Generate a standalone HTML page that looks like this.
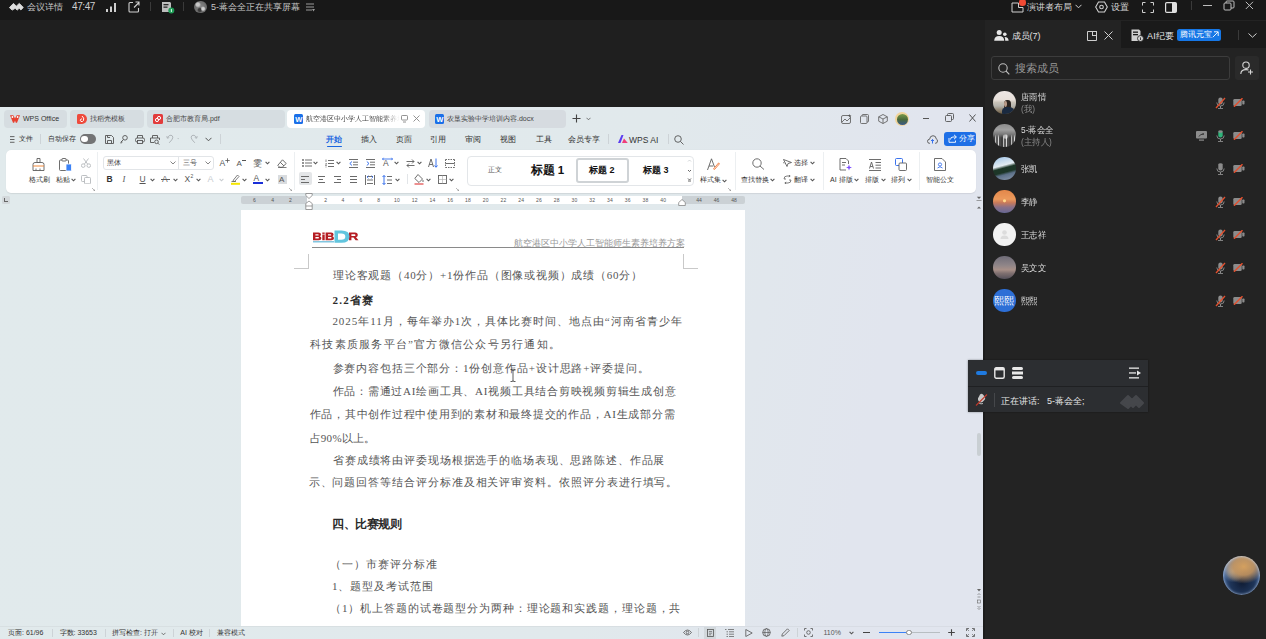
<!DOCTYPE html>
<html><head><meta charset="utf-8">
<style>
*{margin:0;padding:0;box-sizing:border-box}
html,body{width:1266px;height:639px;overflow:hidden;background:#1f1f1f;font-family:"Liberation Sans",sans-serif}
.a{position:absolute}
.t{position:absolute;white-space:nowrap;line-height:1}
#topbar{left:0;top:0;width:1266px;height:20px;background:#181818}
#dark{left:0;top:20px;width:985px;height:87px;background:#1f1f1f}
#panel{left:985px;top:20px;width:281px;height:619px;background:#232323}
#wps{left:0;top:107px;width:983px;height:532px;background:linear-gradient(100deg,#e1eaec 0%,#e1e9ec 62%,#e1e5ee 86%,#e1e5ee 100%);overflow:hidden}
#wpsedge{left:983px;top:107px;width:2px;height:532px;background:#1c1c1c}
</style></head><body>
<div id="topbar" class="a"></div>
<div id="dark" class="a"></div>
<div id="panel" class="a"></div>
<div id="wps" class="a"></div>
<div id="wpsedge" class="a"></div>

<!-- TOP BAR -->
<svg class="a" style="left:0px;top:0px" width="30" height="14" viewBox="0 0 30 14"><path d="M9.4 7.6 L13.5 3.4 L16.3 6.2 L19.3 3.4 L23.3 7.5 L20.9 9.9 L19.2 8.3 L17.2 10.1 L15.2 8.3 L12.2 10.1 Z" fill="#dedede" stroke="#dedede" stroke-width="0.9" stroke-linejoin="round"/></svg>
<div class="t" style="left:27px;top:3px;font-size:9px;color:#c6c6c6">会议详情</div>
<div class="t" style="left:72px;top:2px;font-size:10px;color:#cfcfcf;letter-spacing:-0.4px">47:47</div>
<svg class="a" style="left:106px;top:3px" width="11" height="9"><rect x="0" y="6" width="2" height="3" fill="#cfcfcf"/><rect x="4" y="3.5" width="2" height="5.5" fill="#cfcfcf"/><rect x="8" y="0" width="2" height="9" fill="#cfcfcf"/></svg>
<svg class="a" style="left:128px;top:1px" width="12" height="12" viewBox="0 0 12 12"><path d="M5 1.5 H2 Q1 1.5 1 2.5 V10 Q1 11 2 11 H9.5 Q10.5 11 10.5 10 V7" fill="none" stroke="#cfcfcf" stroke-width="1.1"/><path d="M6 6.5 L11 1.5 M7.5 1 H11 V4.5" fill="none" stroke="#cfcfcf" stroke-width="1.1"/></svg>
<div class="a" style="left:150px;top:2px;width:1px;height:9px;background:#3a3a3a"></div>
<svg class="a" style="left:161px;top:1px" width="14" height="13" viewBox="0 0 14 13"><path d="M1 1 H9 L10 2 V11 H1 Z" fill="#bdbdbd"/><rect x="2.5" y="3" width="5" height="1.3" fill="#2a2a2a"/><rect x="2.5" y="5.5" width="4" height="1.3" fill="#2a2a2a"/><circle cx="10.3" cy="9.6" r="3" fill="#1f9d57"/><rect x="9.9" y="8" width="0.9" height="3" fill="#e8fff0"/></svg>
<div class="a" style="left:183px;top:2px;width:1px;height:9px;background:#3a3a3a"></div>
<div class="a" style="left:194px;top:0.5px;width:12.5px;height:12.5px;border-radius:50%;background:radial-gradient(circle at 30% 30%, #c8c8c8 0 12%, transparent 25%), radial-gradient(circle at 70% 65%, #d0d0d0 0 10%, transparent 22%), radial-gradient(circle at 45% 75%, #3a3a3a 0 12%, transparent 25%), radial-gradient(circle at 50% 50%, #8a8a8a, #6a6a6a 70%, #5a5a5a)"></div>
<div class="t" style="left:211px;top:3px;font-size:9px;color:#c6c6c6">5-蒋会全正在共享屏幕</div>
<svg class="a" style="left:306px;top:3px" width="9" height="9"><rect x="0" y="0.5" width="8" height="1" fill="#9a9a9a"/><rect x="0" y="3.5" width="8" height="1" fill="#9a9a9a"/><rect x="0" y="6.5" width="6" height="1" fill="#9a9a9a"/><path d="M6 6 L9 6 L7.5 8.5Z" fill="#9a9a9a"/></svg>

<svg class="a" style="left:1011px;top:2px" width="13" height="11" viewBox="0 0 13 11"><path d="M1 1 H7.5 V5.5 H12 V10 H1 Z" fill="none" stroke="#cfcfcf" stroke-width="1"/></svg>
<div class="a" style="left:1019px;top:-1px;width:6.5px;height:6.5px;border-radius:50%;background:#f04a34"></div>
<div class="t" style="left:1027px;top:3px;font-size:9px;color:#d4d4d4">演讲者布局</div>
<svg class="a" style="left:1075px;top:4px" width="7" height="5"><path d="M0.5 0.8 L3.5 3.8 L6.5 0.8" fill="none" stroke="#cfcfcf" stroke-width="1"/></svg>
<svg class="a" style="left:1095px;top:1px" width="13" height="12" viewBox="0 0 13 12"><path d="M3.5 1 H9.5 L12.3 6 L9.5 11 H3.5 L0.7 6 Z" fill="none" stroke="#cfcfcf" stroke-width="1.1"/><circle cx="6.5" cy="6" r="1.8" fill="none" stroke="#cfcfcf" stroke-width="1.1"/></svg>
<div class="t" style="left:1111px;top:3px;font-size:9px;color:#d4d4d4">设置</div>
<svg class="a" style="left:1142px;top:2px" width="12" height="11" viewBox="0 0 12 11"><path d="M0.5 3.5 V0.5 H3.5 M8.5 0.5 H11.5 V3.5 M11.5 7.5 V10.5 H8.5 M3.5 10.5 H0.5 V7.5" fill="none" stroke="#cfcfcf" stroke-width="1"/></svg>
<svg class="a" style="left:1165px;top:2px" width="12" height="11" viewBox="0 0 12 11"><rect x="0.6" y="0.6" width="10.8" height="9.8" rx="1.2" fill="none" stroke="#e0e0e0" stroke-width="1.2"/><rect x="7" y="1" width="4" height="9" fill="#e0e0e0"/></svg>
<div class="a" style="left:1191px;top:1px;width:1px;height:9px;background:#3a3a3a"></div>
<div class="a" style="left:1203px;top:5px;width:9px;height:1px;background:#bdbdbd"></div>
<svg class="a" style="left:1223px;top:0px" width="12" height="11" viewBox="0 0 12 11"><rect x="1" y="3" width="7" height="7" rx="1" fill="none" stroke="#bdbdbd" stroke-width="1"/><path d="M3 3 V2 Q3 1 4 1 H10 Q11 1 11 2 V7 Q11 8 10 8 H8" fill="none" stroke="#bdbdbd" stroke-width="1"/></svg>
<svg class="a" style="left:1245px;top:1px" width="9" height="9"><path d="M0.8 0.8 L8 8 M8 0.8 L0.8 8" stroke="#bdbdbd" stroke-width="1"/></svg>



<!-- WPS TABS -->
<div class="a" style="left:4px;top:110px;width:63px;height:17.5px;border-radius:4px;background:#d6dde1"></div>
<svg class="a" style="left:10px;top:115px" width="10" height="8" viewBox="0 0 10 8"><path d="M0 0.3 H3.3 L5 3.6 L6.7 0.3 H10 L7 7.7 H5.8 L5 5.5 L4.2 7.7 H3 Z" fill="#e8402f"/><circle cx="2.4" cy="2" r="0.9" fill="#fff"/><circle cx="7.6" cy="2" r="0.9" fill="#fff"/></svg>
<div class="t" style="left:23px;top:115px;font-size:7px;color:#333;">WPS Office</div>
<div class="a" style="left:70px;top:110px;width:74px;height:17.5px;border-radius:4px;background:#d6dde1"></div>
<div class="a" style="left:77px;top:114px;width:9.5px;height:10px;border-radius:1.5px 5px 5px 1.5px;background:#ee4a3c"></div>
<svg class="a" style="left:78px;top:115px" width="8" height="8"><path d="M4 1 Q6.5 3 5.5 5.5 Q4.5 7 3 6.5 Q2 6 2.5 4.5 Q3 3.8 4 4" fill="none" stroke="#fff" stroke-width="1"/></svg>
<div class="t" style="left:90px;top:115px;font-size:7px;color:#444">找稻壳模板</div>
<div class="a" style="left:146.5px;top:110px;width:138px;height:17.5px;border-radius:4px;background:#d6dde1"></div>
<div class="a" style="left:153px;top:114px;width:9.5px;height:9.5px;border-radius:1.5px;background:#e23b3b"></div>
<svg class="a" style="left:154px;top:115px" width="8" height="8"><circle cx="5" cy="3" r="1.6" fill="none" stroke="#fff" stroke-width="1"/><circle cx="3" cy="5" r="1.6" fill="none" stroke="#fff" stroke-width="1"/></svg>
<div class="t" style="left:166px;top:115px;font-size:7px;color:#444">合肥市教育局.pdf</div>
<div class="a" style="left:287px;top:110px;width:138px;height:17.6px;border-radius:4px;background:#fff"></div>
<div class="a" style="left:294px;top:114.2px;width:9.2px;height:9.5px;border-radius:1.5px;background:#1a6fe8"></div>
<div class="t" style="left:295.2px;top:115.5px;font-size:7.5px;color:#fff;font-weight:bold">W</div>
<div class="t" style="left:306px;top:115px;font-size:7px;color:#444;width:94px;overflow:hidden;-webkit-mask-image:linear-gradient(90deg,#000 80%,transparent)">航空港区中小学人工智能素养培</div>
<svg class="a" style="left:401px;top:115px" width="7" height="8"><rect x="0.5" y="0.5" width="6" height="4.5" rx="0.8" fill="none" stroke="#777" stroke-width="0.8"/><path d="M2 7 H5" stroke="#777" stroke-width="0.8"/></svg>
<svg class="a" style="left:413px;top:115px" width="7" height="7"><path d="M0.5 0.5 L6.5 6.5 M6.5 0.5 L0.5 6.5" stroke="#888" stroke-width="0.9"/></svg>
<div class="a" style="left:428.6px;top:110px;width:137px;height:17.5px;border-radius:4px;background:#d6dbe0"></div>
<div class="a" style="left:435px;top:114.2px;width:9.2px;height:9.5px;border-radius:1.5px;background:#1a6fe8"></div>
<div class="t" style="left:436.2px;top:115.5px;font-size:7.5px;color:#fff;font-weight:bold">W</div>
<div class="t" style="left:447px;top:115px;font-size:7px;color:#444">农垦实验中学培训内容.docx</div>
<svg class="a" style="left:572px;top:114px" width="9" height="9"><path d="M4.5 0.5 V8.5 M0.5 4.5 H8.5" stroke="#444" stroke-width="1.1"/></svg>
<svg class="a" style="left:586px;top:117px" width="5" height="4"><path d="M0.5 0.8 L2.5 2.8 L4.5 0.8" fill="none" stroke="#555" stroke-width="0.8"/></svg>

<svg class="a" style="left:841px;top:114px" width="11" height="10" viewBox="0 0 11 10"><rect x="0.5" y="1.5" width="9" height="8" rx="1.5" fill="none" stroke="#666" stroke-width="0.9"/><path d="M1 8 L4 5 L6 7 L9 4" fill="none" stroke="#666" stroke-width="0.9"/><path d="M8.5 0 L9 1.3 L10.5 1.8 L9 2.3 L8.5 3.6 L8 2.3 L6.5 1.8 L8 1.3Z" fill="#555"/></svg>
<svg class="a" style="left:860px;top:114px" width="9" height="10" viewBox="0 0 9 10"><rect x="0.5" y="2" width="6.5" height="7.5" rx="1" fill="none" stroke="#666" stroke-width="0.9"/><path d="M2 2 V1.5 Q2 0.5 3 0.5 H7.5 Q8.5 0.5 8.5 1.5 V7 Q8.5 8 7.5 8 H7" fill="none" stroke="#666" stroke-width="0.9"/></svg>
<svg class="a" style="left:878px;top:113.5px" width="10" height="10" viewBox="0 0 10 10"><path d="M5 0.5 L9.3 2.8 V7.2 L5 9.5 L0.7 7.2 V2.8Z M0.7 2.8 L5 5 L9.3 2.8 M5 5 V9.5" fill="none" stroke="#666" stroke-width="0.9"/></svg>
<div class="a" style="left:895px;top:112px;width:14px;height:14px;border-radius:50%;background:#f1d49a"></div>
<div class="a" style="left:896.5px;top:113.5px;width:11px;height:11px;border-radius:50%;background:linear-gradient(#7a9a4a,#4a6a3a 50%,#3a5a8a)"></div>
<div class="a" style="left:923px;top:118px;width:6px;height:0.9px;background:#555"></div>
<svg class="a" style="left:944.5px;top:113px" width="9" height="9"><rect x="0.5" y="2.5" width="6" height="6" rx="1" fill="none" stroke="#555" stroke-width="0.9"/><path d="M2.5 2.5 V1.5 Q2.5 0.5 3.5 0.5 H7.5 Q8.5 0.5 8.5 1.5 V5.5 Q8.5 6.5 7.5 6.5 H6.5" fill="none" stroke="#555" stroke-width="0.9"/></svg>
<svg class="a" style="left:968.5px;top:113px" width="7" height="10"><path d="M0.5 1.5 L6.5 8.5 M6.5 1.5 L0.5 8.5" stroke="#444" stroke-width="0.9"/></svg>

<!-- Row 2 -->
<svg class="a" style="left:10px;top:136px" width="5" height="7"><rect x="0" y="0.2" width="4.5" height="0.9" fill="#555"/><rect x="0" y="3" width="4.5" height="0.9" fill="#555"/><rect x="0" y="5.8" width="4.5" height="0.9" fill="#555"/></svg>
<div class="t" style="left:19px;top:135px;font-size:7px;color:#333">文件</div>
<div class="a" style="left:40px;top:134px;width:1px;height:10px;background:#cdd3d7"></div>
<div class="t" style="left:47.5px;top:135px;font-size:7px;color:#333">自动保存</div>
<div class="a" style="left:80px;top:134px;width:16px;height:9.5px;border-radius:5px;background:#737475"></div>
<div class="a" style="left:81px;top:135.5px;width:6.6px;height:6.6px;border-radius:50%;background:#fff"></div>
<svg class="a" style="left:105px;top:134.5px" width="9" height="9" viewBox="0 0 9 9"><path d="M0.5 0.5 H6.5 L8.5 2.5 V8.5 H0.5Z" fill="none" stroke="#555" stroke-width="0.9"/><path d="M2.5 8.5 V5.5 H6.5 V8.5 M2.5 0.5 V2.5 H5" fill="none" stroke="#555" stroke-width="0.9"/></svg>
<svg class="a" style="left:120px;top:134.5px" width="8" height="9" viewBox="0 0 8 9"><circle cx="5" cy="2.8" r="2.3" fill="none" stroke="#555" stroke-width="0.9"/><path d="M3.5 4.5 L1 7 M1 7 H2.5 M1 7 V8.5" fill="none" stroke="#555" stroke-width="0.9"/></svg>
<svg class="a" style="left:134.5px;top:134.5px" width="10" height="9" viewBox="0 0 10 9"><path d="M2.5 3 V0.5 H7.5 V3" fill="none" stroke="#555" stroke-width="0.9"/><rect x="0.5" y="3" width="9" height="4" rx="1.5" fill="none" stroke="#555" stroke-width="0.9"/><rect x="2.5" y="5.5" width="5" height="3" fill="#e1e8ec" stroke="#555" stroke-width="0.9"/></svg>
<svg class="a" style="left:150px;top:134.5px" width="10" height="10" viewBox="0 0 10 10"><path d="M2.5 3 V0.5 H7.5 V3" fill="none" stroke="#555" stroke-width="0.9"/><path d="M4 7.5 H0.5 V3 H9.5 V5" fill="none" stroke="#555" stroke-width="0.9"/><circle cx="6.5" cy="6.8" r="1.8" fill="none" stroke="#555" stroke-width="0.9"/><path d="M7.8 8.1 L9.3 9.6" stroke="#555" stroke-width="0.9"/></svg>
<svg class="a" style="left:166px;top:134px" width="16" height="10" viewBox="0 0 16 10"><path d="M1.5 3.5 Q3 1 5 1.2 Q7 1.5 6.8 3.8 Q6.5 5.5 3.2 8.8" fill="none" stroke="#a9afb3" stroke-width="0.9"/><path d="M0.8 2.2 L1.3 4.2 L3.2 3.6" fill="none" stroke="#a9afb3" stroke-width="0.9"/><path d="M11.3 4.2 L13 4.2 L12.15 5.3Z" fill="#a9afb3"/></svg>
<svg class="a" style="left:189px;top:134px" width="9" height="10" viewBox="0 0 9 10"><path d="M7.5 3.5 Q6 1 4 1.2 Q2 1.5 2.2 3.8 Q2.5 5.5 5.8 8.8" fill="none" stroke="#a9afb3" stroke-width="0.9"/><path d="M8.2 2.2 L7.7 4.2 L5.8 3.6" fill="none" stroke="#a9afb3" stroke-width="0.9"/></svg>
<svg class="a" style="left:204.5px;top:137px" width="7" height="5"><path d="M0.5 0.8 L3.5 3.8 L6.5 0.8" fill="none" stroke="#555" stroke-width="1"/></svg>
<div class="a" style="left:220px;top:134px;width:1px;height:10px;background:#cdd3d7"></div>

<div class="t" style="left:326px;top:136px;font-size:8px;color:#1a66e0;font-weight:bold">开始</div>
<div class="a" style="left:326.5px;top:145.5px;width:15.5px;height:1.5px;background:#1a66e0;border-radius:1px"></div>
<div class="t" style="left:360.5px;top:136px;font-size:8px;color:#333">插入</div>
<div class="t" style="left:395.5px;top:136px;font-size:8px;color:#333">页面</div>
<div class="t" style="left:430px;top:136px;font-size:8px;color:#333">引用</div>
<div class="t" style="left:465px;top:136px;font-size:8px;color:#333">审阅</div>
<div class="t" style="left:500px;top:136px;font-size:8px;color:#333">视图</div>
<div class="t" style="left:535.5px;top:136px;font-size:8px;color:#333">工具</div>
<div class="t" style="left:568px;top:136px;font-size:8px;color:#333">会员专享</div>
<div class="a" style="left:608px;top:134px;width:1px;height:10px;background:#cdd3d7"></div>
<svg class="a" style="left:618px;top:135px" width="10" height="8" viewBox="0 0 10 8"><path d="M0 8 L3.5 0 H5.5 L2.5 8Z" fill="#5b3cf0"/><path d="M4 8 L6 3.5 L9.8 8Z" fill="#ee3e7a"/></svg>
<div class="t" style="left:629px;top:135.5px;font-size:8.5px;color:#333">WPS AI</div>
<div class="a" style="left:668px;top:134px;width:1px;height:10px;background:#cdd3d7"></div>
<svg class="a" style="left:674px;top:134.5px" width="10" height="10" viewBox="0 0 10 10"><circle cx="4" cy="4" r="3.3" fill="none" stroke="#555" stroke-width="0.9"/><path d="M6.5 6.5 L9.5 9.5" stroke="#555" stroke-width="0.9"/></svg>
<svg class="a" style="left:927px;top:134.5px" width="11" height="9" viewBox="0 0 11 9"><path d="M3 8.3 H2.5 Q0.5 8.3 0.5 6.3 Q0.5 4.3 2.5 4.3 Q3 0.7 6 0.7 Q9 0.7 9.2 3.8 Q10.5 4.3 10.5 6 Q10.5 8.3 8.3 8.3 H8" fill="none" stroke="#555" stroke-width="0.9"/><path d="M5.5 8.5 V4.5 M4 6 L5.5 4.5 L7 6" fill="none" stroke="#2563eb" stroke-width="0.9"/></svg>
<div class="a" style="left:944px;top:132px;width:32px;height:13.7px;border-radius:3px;background:#1e6fe6"></div>
<svg class="a" style="left:947.5px;top:134px" width="9" height="9" viewBox="0 0 9 9"><path d="M6 0.8 L8.4 3 L6 5.2 M8.2 3 H5 Q2.5 3 2.5 5.5 M1 4 V8.3 H7.5 V6.5" fill="none" stroke="#fff" stroke-width="0.9"/></svg>
<div class="t" style="left:958.5px;top:135px;font-size:7.5px;color:#fff">分享</div>


<!-- RIBBON -->
<div class="a" style="left:6px;top:150px;width:970px;height:42.5px;border-radius:5px;background:#fff;box-shadow:0 0.5px 1px rgba(0,0,0,.08)"></div>
<!-- clipboard group -->
<svg class="a" style="left:32px;top:158px" width="13" height="13" viewBox="0 0 13 13"><path d="M5 0.5 H8 V4.5 H5Z" fill="none" stroke="#5e5e5e" stroke-width="0.9"/><path d="M1 12.5 V6.5 Q1 4.5 3 4.5 H10 Q12 4.5 12 6.5 V12.5Z" fill="none" stroke="#5e5e5e" stroke-width="0.9"/><path d="M1 8 H12" stroke="#f08a3c" stroke-width="1"/><path d="M4 12.5 V10.5 M8 12.5 V10.5" stroke="#5e5e5e" stroke-width="0.8"/></svg>
<div class="t" style="left:28.5px;top:175.5px;font-size:7px;color:#333">格式刷</div>
<svg class="a" style="left:59px;top:158px" width="13" height="13" viewBox="0 0 13 13"><rect x="0.5" y="2" width="9" height="10.5" rx="1" fill="none" stroke="#5e5e5e" stroke-width="0.9"/><rect x="3" y="0.5" width="4" height="2.5" rx="0.5" fill="#fff" stroke="#5e5e5e" stroke-width="0.9"/><rect x="7" y="6" width="5.5" height="7" rx="0.8" fill="#3b82f6" stroke="#fff" stroke-width="0.8"/></svg>
<div class="t" style="left:55.5px;top:175.5px;font-size:7px;color:#333">粘贴</div>
<svg class="a" style="left:70.5px;top:178.2px" width="5" height="4"><path d="M0.6 0.8 L2.5 2.8 L4.4 0.8" fill="none" stroke="#555" stroke-width="1.1"/></svg>

<svg class="a" style="left:81px;top:158px" width="10" height="10" viewBox="0 0 10 10"><circle cx="2.2" cy="7.6" r="1.8" fill="none" stroke="#b5b9bc" stroke-width="0.9"/><circle cx="7.8" cy="7.6" r="1.8" fill="none" stroke="#b5b9bc" stroke-width="0.9"/><path d="M3.3 6.2 L7.5 0.5 M6.7 6.2 L2.5 0.5" stroke="#b5b9bc" stroke-width="0.9"/></svg>
<svg class="a" style="left:81px;top:175px" width="10" height="9" viewBox="0 0 10 9"><rect x="0.5" y="0.5" width="5.5" height="6" rx="0.8" fill="none" stroke="#b5b9bc" stroke-width="0.9"/><rect x="3.5" y="2.5" width="6" height="6.3" rx="0.8" fill="#fff" stroke="#b5b9bc" stroke-width="0.9"/></svg>
<svg class="a" style="left:92px;top:187.5px" width="3" height="3"><path d="M0 0 L3 3 M3 1 V3 H1" fill="none" stroke="#888" stroke-width="0.6"/></svg>
<div class="a" style="left:97px;top:152px;width:1px;height:38px;background:#eceff1"></div>
<!-- font group -->
<div class="a" style="left:102.5px;top:155.5px;width:111px;height:14.5px;border:1px solid #e2e5e8;border-radius:3px"></div>
<div class="a" style="left:177.5px;top:156px;width:1px;height:13.5px;background:#e2e5e8"></div>
<div class="t" style="left:107px;top:159px;font-size:7px;color:#333">黑体</div>
<svg class="a" style="left:170px;top:161px" width="6" height="4"><path d="M0.5 0.5 L3 3 L5.5 0.5" fill="none" stroke="#666" stroke-width="0.8"/></svg>
<div class="t" style="left:183px;top:159px;font-size:7px;color:#555">三号</div>
<svg class="a" style="left:204.5px;top:161px" width="6" height="4"><path d="M0.5 0.5 L3 3 L5.5 0.5" fill="none" stroke="#666" stroke-width="0.8"/></svg>
<div class="t" style="left:219.5px;top:158.5px;font-size:8.5px;color:#555">A</div>
<svg class="a" style="left:225px;top:157.5px" width="5" height="5"><path d="M2.5 0.3 V4.7 M0.3 2.5 H4.7" stroke="#555" stroke-width="0.8"/></svg>
<div class="t" style="left:236.5px;top:159.5px;font-size:8px;color:#555">A</div>
<div class="a" style="left:242px;top:159.5px;width:4px;height:0.8px;background:#555"></div>
<div class="t" style="left:253px;top:158.5px;font-size:9px;color:#555">雯</div>
<svg class="a" style="left:264.5px;top:161.2px" width="5" height="4"><path d="M0.6 0.8 L2.5 2.8 L4.4 0.8" fill="none" stroke="#555" stroke-width="1.1"/></svg>

<svg class="a" style="left:276.5px;top:158.5px" width="10" height="9" viewBox="0 0 10 9"><path d="M5.5 0.8 L9.2 4.5 L5.2 8.3 H2.8 L0.8 6.3 Z M3.2 3.2 L7 7" fill="none" stroke="#5e5e5e" stroke-width="0.9"/><path d="M1 8.5 H9.5" stroke="#5e5e5e" stroke-width="0.8"/></svg>

<div class="t" style="left:106.5px;top:174.5px;font-size:8.5px;color:#333;font-weight:bold">B</div>
<div class="t" style="left:122.5px;top:174.5px;font-size:8.5px;color:#555;font-style:italic;font-family:'Liberation Serif',serif">I</div>
<div class="t" style="left:139.5px;top:174.5px;font-size:8.5px;color:#555;text-decoration:underline">U</div>
<svg class="a" style="left:149.5px;top:178.2px" width="5" height="4"><path d="M0.6 0.8 L2.5 2.8 L4.4 0.8" fill="none" stroke="#555" stroke-width="1.1"/></svg>

<div class="t" style="left:162px;top:174.5px;font-size:8.5px;color:#555">A</div>
<div class="a" style="left:161px;top:179px;width:9px;height:0.8px;background:#5e5e5e"></div>
<svg class="a" style="left:172.5px;top:178.2px" width="5" height="4"><path d="M0.6 0.8 L2.5 2.8 L4.4 0.8" fill="none" stroke="#555" stroke-width="1.1"/></svg>

<div class="t" style="left:184.5px;top:174.5px;font-size:8.5px;color:#555">X</div>
<div class="t" style="left:190.5px;top:173.5px;font-size:5px;color:#555">2</div>
<svg class="a" style="left:196px;top:178.2px" width="5" height="4"><path d="M0.6 0.8 L2.5 2.8 L4.4 0.8" fill="none" stroke="#555" stroke-width="1.1"/></svg>

<div class="t" style="left:207.5px;top:174.5px;font-size:9px;color:#c8ccd0">A</div>
<svg class="a" style="left:218.5px;top:178.2px" width="5" height="4"><path d="M0.6 0.8 L2.5 2.8 L4.4 0.8" fill="none" stroke="#c8ccd0" stroke-width="1.1"/></svg>

<svg class="a" style="left:230.5px;top:174px" width="9" height="11" viewBox="0 0 9 11"><path d="M2 6.5 L6.5 1 L8 2.5 L3.5 7.5Z M0.5 7.5 H5" fill="none" stroke="#5e5e5e" stroke-width="0.8"/><rect x="0" y="8.8" width="9" height="2" fill="#f5e600"/></svg>
<svg class="a" style="left:242px;top:178.2px" width="5" height="4"><path d="M0.6 0.8 L2.5 2.8 L4.4 0.8" fill="none" stroke="#555" stroke-width="1.1"/></svg>

<div class="t" style="left:253.5px;top:173.5px;font-size:8.5px;color:#555">A</div>
<div class="a" style="left:253px;top:182px;width:9.5px;height:2px;background:#1a2fd8"></div>
<svg class="a" style="left:265px;top:178.2px" width="5" height="4"><path d="M0.6 0.8 L2.5 2.8 L4.4 0.8" fill="none" stroke="#555" stroke-width="1.1"/></svg>

<div class="a" style="left:277.5px;top:174.5px;width:9px;height:9.5px;background:#d9dcdf"></div>
<div class="t" style="left:279px;top:175.5px;font-size:8px;color:#555">A</div>
<svg class="a" style="left:289px;top:187.5px" width="3" height="3"><path d="M0 0 L3 3 M3 1 V3 H1" fill="none" stroke="#888" stroke-width="0.6"/></svg>
<div class="a" style="left:293.5px;top:152px;width:1px;height:38px;background:#eceff1"></div>


<!-- paragraph group -->
<svg class="a" style="left:301.5px;top:159px" width="10" height="8" viewBox="0 0 10 8"><circle cx="1" cy="1" r="0.9" fill="#5e5e5e"/><circle cx="1" cy="4" r="0.9" fill="#5e5e5e"/><circle cx="1" cy="7" r="0.9" fill="#5e5e5e"/><path d="M3 1 H10 M3 4 H10 M3 7 H10" stroke="#5e5e5e" stroke-width="0.9"/></svg>
<svg class="a" style="left:313px;top:161.2px" width="5" height="4"><path d="M0.6 0.8 L2.5 2.8 L4.4 0.8" fill="none" stroke="#555" stroke-width="1.1"/></svg>

<svg class="a" style="left:325px;top:158.5px" width="9" height="9" viewBox="0 0 9 9"><path d="M1 0.5 V3 M0.5 4.5 H1.5 L0.5 6.5 H1.8 M0.5 8 H1.5" fill="none" stroke="#5e5e5e" stroke-width="0.7"/><path d="M3 1.5 H9 M3 4.5 H9 M3 7.5 H9" stroke="#5e5e5e" stroke-width="0.9"/></svg>
<svg class="a" style="left:336px;top:161.2px" width="5" height="4"><path d="M0.6 0.8 L2.5 2.8 L4.4 0.8" fill="none" stroke="#555" stroke-width="1.1"/></svg>

<svg class="a" style="left:349px;top:158.5px" width="9" height="9" viewBox="0 0 9 9"><path d="M0 0.5 H9 M4 3.2 H9 M4 5.8 H9 M0 8.5 H9" stroke="#5e5e5e" stroke-width="0.9"/><path d="M3 2.5 L0.8 4.5 L3 6.5" fill="none" stroke="#2563eb" stroke-width="0.9"/></svg>
<svg class="a" style="left:365.5px;top:158.5px" width="9" height="9" viewBox="0 0 9 9"><path d="M0 0.5 H9 M4 3.2 H9 M4 5.8 H9 M0 8.5 H9" stroke="#5e5e5e" stroke-width="0.9"/><path d="M0.8 2.5 L3 4.5 L0.8 6.5" fill="none" stroke="#2563eb" stroke-width="0.9"/></svg>
<div class="t" style="left:383px;top:159px;font-size:8.5px;color:#555">A</div>
<svg class="a" style="left:381.5px;top:157px" width="11" height="4"><path d="M0.5 2 H10.5 M1.5 0.8 L0.5 2 L1.5 3.2 M9.5 0.8 L10.5 2 L9.5 3.2" fill="none" stroke="#2563eb" stroke-width="0.8"/></svg>
<svg class="a" style="left:394px;top:161.2px" width="5" height="4"><path d="M0.6 0.8 L2.5 2.8 L4.4 0.8" fill="none" stroke="#555" stroke-width="1.1"/></svg>

<svg class="a" style="left:405.5px;top:158.5px" width="9" height="9" viewBox="0 0 9 9"><path d="M0.5 2.5 H8 M6 0.5 L8 2.5 L6 4.5 M8.5 6.5 H1 M3 4.5 L1 6.5 L3 8.5" fill="none" stroke="#5e5e5e" stroke-width="0.9"/></svg>
<svg class="a" style="left:417px;top:161.2px" width="5" height="4"><path d="M0.6 0.8 L2.5 2.8 L4.4 0.8" fill="none" stroke="#555" stroke-width="1.1"/></svg>

<svg class="a" style="left:428px;top:158px" width="10" height="10" viewBox="0 0 10 10"><path d="M0.5 9 L3 1 L5.5 9 M1.3 6.5 H4.7" fill="none" stroke="#5e5e5e" stroke-width="0.9"/><path d="M8 0.5 V9 M6.5 7.5 L8 9.3 L9.5 7.5" fill="none" stroke="#2563eb" stroke-width="0.9"/></svg>
<svg class="a" style="left:445px;top:158.5px" width="10" height="9" viewBox="0 0 10 9"><path d="M0.5 0.5 H9.5 M0.5 8.5 H9.5 M0.5 0.5 V8.5 M9.5 0.5 V8.5" fill="none" stroke="#5e5e5e" stroke-width="0.9" stroke-dasharray="1.5 1"/><path d="M0.5 4.5 H9.5" stroke="#5e5e5e" stroke-width="0.9"/></svg>

<div class="a" style="left:298.5px;top:172.3px;width:13.3px;height:13.2px;border-radius:2px;background:#e4e6e8"></div>
<div class="a" style="left:301px;top:176.0px;width:7.5px;height:0.9px;background:#6a6a6a"></div><div class="a" style="left:301px;top:178.9px;width:4px;height:0.9px;background:#6a6a6a"></div><div class="a" style="left:301px;top:181.8px;width:7.5px;height:0.9px;background:#6a6a6a"></div><div class="a" style="left:317.5px;top:176.0px;width:7.5px;height:0.9px;background:#6a6a6a"></div><div class="a" style="left:319.3px;top:178.9px;width:4px;height:0.9px;background:#6a6a6a"></div><div class="a" style="left:317.5px;top:181.8px;width:7.5px;height:0.9px;background:#6a6a6a"></div><div class="a" style="left:333.5px;top:176.0px;width:7.5px;height:0.9px;background:#6a6a6a"></div><div class="a" style="left:337.0px;top:178.9px;width:4px;height:0.9px;background:#6a6a6a"></div><div class="a" style="left:333.5px;top:181.8px;width:7.5px;height:0.9px;background:#6a6a6a"></div><div class="a" style="left:349.5px;top:176.0px;width:7.5px;height:0.9px;background:#6a6a6a"></div><div class="a" style="left:349.5px;top:178.9px;width:7.5px;height:0.9px;background:#6a6a6a"></div><div class="a" style="left:349.5px;top:181.8px;width:7.5px;height:0.9px;background:#6a6a6a"></div>
<svg class="a" style="left:364.5px;top:174.5px" width="10" height="10" viewBox="0 0 10 10"><path d="M0.5 0 V10 M9.5 0 V10 M2 1.5 H8 M2 5 H8 M2 8.5 H8" stroke="#5e5e5e" stroke-width="0.9"/><path d="M3.5 0.5 L2 2 L3.5 3.5 M6.5 0.5 L8 2 L6.5 3.5" fill="none" stroke="#2563eb" stroke-width="0.7"/></svg>
<svg class="a" style="left:382px;top:174.5px" width="10" height="10" viewBox="0 0 10 10"><path d="M2 0.5 V9.5 M0.5 2 L2 0.5 L3.5 2 M0.5 8 L2 9.5 L3.5 8" fill="none" stroke="#2563eb" stroke-width="0.9"/><path d="M5 1.5 H10 M5 5 H10 M5 8.5 H10" stroke="#5e5e5e" stroke-width="0.9"/></svg>
<svg class="a" style="left:394.5px;top:178.2px" width="5" height="4"><path d="M0.6 0.8 L2.5 2.8 L4.4 0.8" fill="none" stroke="#555" stroke-width="1.1"/></svg>

<div class="a" style="left:406.5px;top:174px;width:1px;height:10px;background:#e2e5e8"></div>
<svg class="a" style="left:414px;top:174px" width="10" height="11" viewBox="0 0 10 11"><path d="M4 0.5 L8.5 5 L5 8.5 L0.8 4.5Z" fill="none" stroke="#5e5e5e" stroke-width="0.9"/><circle cx="9" cy="7" r="0.8" fill="#5e5e5e"/><path d="M0.5 10 H9.5" stroke="#e04545" stroke-width="1.2"/></svg>
<svg class="a" style="left:426px;top:178.2px" width="5" height="4"><path d="M0.6 0.8 L2.5 2.8 L4.4 0.8" fill="none" stroke="#555" stroke-width="1.1"/></svg>

<svg class="a" style="left:437.5px;top:174.5px" width="9" height="9" viewBox="0 0 9 9"><rect x="0.5" y="0.5" width="8" height="8" fill="none" stroke="#5e5e5e" stroke-width="0.9"/><path d="M4.5 0.5 V8.5 M0.5 4.5 H8.5" stroke="#aaa" stroke-width="0.6"/></svg>
<svg class="a" style="left:449px;top:178.2px" width="5" height="4"><path d="M0.6 0.8 L2.5 2.8 L4.4 0.8" fill="none" stroke="#555" stroke-width="1.1"/></svg>

<svg class="a" style="left:455.5px;top:187.5px" width="3" height="3"><path d="M0 0 L3 3 M3 1 V3 H1" fill="none" stroke="#888" stroke-width="0.6"/></svg>

<!-- styles gallery -->
<div class="a" style="left:466.5px;top:155.5px;width:227px;height:30px;border:1px solid #e3e6e9;border-radius:4px"></div>
<div class="t" style="left:487.5px;top:166.5px;font-size:7px;color:#555;font-family:'Liberation Serif',serif">正文</div>
<div class="t" style="left:530.5px;top:164.5px;font-size:11.5px;color:#111;font-weight:bold">标题 1</div>
<div class="a" style="left:576px;top:158px;width:53px;height:25px;border:2px solid #cfd3d6;border-radius:3px"></div>
<div class="t" style="left:589px;top:166px;font-size:9px;color:#111;font-weight:bold">标题 2</div>
<div class="t" style="left:643px;top:166px;font-size:9px;color:#111;font-weight:bold">标题 3</div>
<svg class="a" style="left:686.5px;top:158px" width="5" height="26"><path d="M1 3.5 L2.5 2 L4 3.5" fill="none" stroke="#c5c9cc" stroke-width="0.8"/><path d="M1 12 L2.5 13.5 L4 12" fill="none" stroke="#555" stroke-width="0.9"/><path d="M1 20.5 L2.5 22 L4 20.5 M1 23 H4" fill="none" stroke="#555" stroke-width="0.9"/></svg>
<svg class="a" style="left:707px;top:157.5px" width="13" height="13" viewBox="0 0 13 13"><path d="M0.5 12 L4.5 0.8 L7.5 9 M2 8 H6" fill="none" stroke="#5e5e5e" stroke-width="0.9"/><path d="M6.5 11 L11.5 5 Q12.5 5 12.3 6 L7.5 11.5Z" fill="none" stroke="#f07a3c" stroke-width="0.9"/></svg>
<div class="t" style="left:700px;top:176px;font-size:7px;color:#333">样式集</div>
<svg class="a" style="left:721.5px;top:178.7px" width="5" height="4"><path d="M0.6 0.8 L2.5 2.8 L4.4 0.8" fill="none" stroke="#555" stroke-width="1.1"/></svg>

<svg class="a" style="left:728px;top:187.5px" width="3" height="3"><path d="M0 0 L3 3 M3 1 V3 H1" fill="none" stroke="#888" stroke-width="0.6"/></svg>
<div class="a" style="left:735px;top:152px;width:1px;height:38px;background:#eceff1"></div>

<!-- find group -->
<svg class="a" style="left:752px;top:158px" width="13" height="12" viewBox="0 0 13 12"><circle cx="5" cy="5" r="4.2" fill="none" stroke="#5e5e5e" stroke-width="0.9"/><path d="M8 8 L12 11.5" stroke="#5e5e5e" stroke-width="0.9"/></svg>
<div class="t" style="left:741px;top:175.5px;font-size:7px;color:#333">查找替换</div>
<svg class="a" style="left:770px;top:178.2px" width="5" height="4"><path d="M0.6 0.8 L2.5 2.8 L4.4 0.8" fill="none" stroke="#555" stroke-width="1.1"/></svg>

<svg class="a" style="left:782.5px;top:158.5px" width="9" height="8" viewBox="0 0 9 8"><path d="M0.5 0.5 L8.5 3.5 L5 4.5 L4 7.5Z" fill="none" stroke="#5e5e5e" stroke-width="0.9"/><path d="M0.5 3 L1 4.5" stroke="#5e5e5e" stroke-width="0.7"/></svg>
<div class="t" style="left:794px;top:159px;font-size:7px;color:#333">选择</div>
<svg class="a" style="left:809.5px;top:161.2px" width="5" height="4"><path d="M0.6 0.8 L2.5 2.8 L4.4 0.8" fill="none" stroke="#555" stroke-width="1.1"/></svg>

<svg class="a" style="left:782.5px;top:175px" width="9" height="9" viewBox="0 0 9 9"><path d="M1 4 Q1 1 4 1 H7 M5.8 0 L7.2 1 L5.8 2 M8 5 Q8 8 5 8 H2 M3.2 7 L1.8 8 L3.2 9" fill="none" stroke="#5e5e5e" stroke-width="0.8"/><path d="M2 3 V5 M7 4 V6" stroke="#5e5e5e" stroke-width="0.8"/></svg>
<div class="t" style="left:794px;top:175.5px;font-size:7px;color:#333">翻译</div>
<svg class="a" style="left:809.5px;top:178.2px" width="5" height="4"><path d="M0.6 0.8 L2.5 2.8 L4.4 0.8" fill="none" stroke="#555" stroke-width="1.1"/></svg>

<div class="a" style="left:822.5px;top:152px;width:1px;height:38px;background:#eceff1"></div>
<svg class="a" style="left:838.5px;top:158px" width="13" height="13" viewBox="0 0 13 13"><path d="M7 12 H1 V0.5 H7 L9.5 3 V6" fill="none" stroke="#5e5e5e" stroke-width="0.9"/><path d="M3 4.5 H7 M3 7 H6" stroke="#5e5e5e" stroke-width="0.9"/><path d="M10 6.5 L10.8 8.7 L13 9.5 L10.8 10.3 L10 12.5 L9.2 10.3 L7 9.5 L9.2 8.7Z" fill="#7c4dff"/></svg>
<div class="t" style="left:830px;top:175.5px;font-size:7px;color:#333">AI 排版</div>
<svg class="a" style="left:853.5px;top:178.2px" width="5" height="4"><path d="M0.6 0.8 L2.5 2.8 L4.4 0.8" fill="none" stroke="#555" stroke-width="1.1"/></svg>

<svg class="a" style="left:869px;top:158.5px" width="12" height="12" viewBox="0 0 12 12"><path d="M0 0.5 H12 M0 11.5 H12" stroke="#5e5e5e" stroke-width="0.9"/><path d="M0.5 9.5 L2.5 3 L4.5 9.5 M1.2 7.5 H3.8" fill="none" stroke="#5e5e5e" stroke-width="0.9"/><path d="M6.5 3.5 H12 M6.5 6.2 H12 M6.5 9 H12" stroke="#5e5e5e" stroke-width="0.9"/></svg>
<div class="t" style="left:864.5px;top:175.5px;font-size:7px;color:#333">排版</div>
<svg class="a" style="left:880.5px;top:178.2px" width="5" height="4"><path d="M0.6 0.8 L2.5 2.8 L4.4 0.8" fill="none" stroke="#555" stroke-width="1.1"/></svg>

<svg class="a" style="left:895px;top:158px" width="12" height="13" viewBox="0 0 12 13"><rect x="0.5" y="0.5" width="7" height="7" rx="1" fill="none" stroke="#2563eb" stroke-width="0.9"/><rect x="4" y="5" width="7.5" height="7.5" rx="1" fill="#fff" stroke="#5e5e5e" stroke-width="0.9"/></svg>
<div class="t" style="left:891px;top:175.5px;font-size:7px;color:#333">排列</div>
<svg class="a" style="left:906.5px;top:178.2px" width="5" height="4"><path d="M0.6 0.8 L2.5 2.8 L4.4 0.8" fill="none" stroke="#555" stroke-width="1.1"/></svg>

<div class="a" style="left:918.5px;top:152px;width:1px;height:38px;background:#eceff1"></div>
<svg class="a" style="left:934px;top:158px" width="12" height="13" viewBox="0 0 12 13"><path d="M0.5 0.5 H8 L11.5 4 V12.5 H0.5Z" fill="none" stroke="#5e5e5e" stroke-width="0.9"/><circle cx="6" cy="6.5" r="1.6" fill="none" stroke="#2563eb" stroke-width="0.8"/><path d="M3.5 10 Q6 7.5 8.5 10" fill="none" stroke="#2563eb" stroke-width="0.8"/></svg>
<div class="t" style="left:925.5px;top:175.5px;font-size:7px;color:#333">智能公文</div>


<!-- DOC AREA -->
<div class="a" style="left:1.5px;top:195.5px;width:8px;height:8px;border-radius:1.5px;background:#d3d8db"></div>
<div class="a" style="left:4px;top:198px;width:1.2px;height:3.5px;background:#666"></div>
<div class="a" style="left:4px;top:200.6px;width:3.5px;height:1.2px;background:#666"></div>
<div class="a" style="left:241px;top:196px;width:504px;height:8px;border-radius:2px;background:#cbd1d5"></div>
<div class="a" style="left:307px;top:196px;width:375px;height:8px;background:#fff"></div>
<div class="t" style="left:244.5px;top:197.5px;width:20px;text-align:center;font-size:5px;color:#555">6</div>
<div class="t" style="left:262.6px;top:197.5px;width:20px;text-align:center;font-size:5px;color:#555">4</div>
<div class="t" style="left:280.3px;top:197.5px;width:20px;text-align:center;font-size:5px;color:#555">2</div>
<div class="t" style="left:315.7px;top:197.5px;width:20px;text-align:center;font-size:5px;color:#555">2</div>
<div class="t" style="left:333px;top:197.5px;width:20px;text-align:center;font-size:5px;color:#555">4</div>
<div class="t" style="left:350.8px;top:197.5px;width:20px;text-align:center;font-size:5px;color:#555">6</div>
<div class="t" style="left:368.6px;top:197.5px;width:20px;text-align:center;font-size:5px;color:#555">8</div>
<div class="t" style="left:386.9px;top:197.5px;width:20px;text-align:center;font-size:5px;color:#555">10</div>
<div class="t" style="left:404.65px;top:197.5px;width:20px;text-align:center;font-size:5px;color:#555">12</div>
<div class="t" style="left:422.4px;top:197.5px;width:20px;text-align:center;font-size:5px;color:#555">14</div>
<div class="t" style="left:440.15px;top:197.5px;width:20px;text-align:center;font-size:5px;color:#555">16</div>
<div class="t" style="left:457.9px;top:197.5px;width:20px;text-align:center;font-size:5px;color:#555">18</div>
<div class="t" style="left:475.65px;top:197.5px;width:20px;text-align:center;font-size:5px;color:#555">20</div>
<div class="t" style="left:493.4px;top:197.5px;width:20px;text-align:center;font-size:5px;color:#555">22</div>
<div class="t" style="left:511.15px;top:197.5px;width:20px;text-align:center;font-size:5px;color:#555">24</div>
<div class="t" style="left:528.9px;top:197.5px;width:20px;text-align:center;font-size:5px;color:#555">26</div>
<div class="t" style="left:546.65px;top:197.5px;width:20px;text-align:center;font-size:5px;color:#555">28</div>
<div class="t" style="left:564.4px;top:197.5px;width:20px;text-align:center;font-size:5px;color:#555">30</div>
<div class="t" style="left:582.15px;top:197.5px;width:20px;text-align:center;font-size:5px;color:#555">32</div>
<div class="t" style="left:599.9px;top:197.5px;width:20px;text-align:center;font-size:5px;color:#555">34</div>
<div class="t" style="left:617.65px;top:197.5px;width:20px;text-align:center;font-size:5px;color:#555">36</div>
<div class="t" style="left:635.4px;top:197.5px;width:20px;text-align:center;font-size:5px;color:#555">38</div>
<div class="t" style="left:653.15px;top:197.5px;width:20px;text-align:center;font-size:5px;color:#555">40</div>
<div class="t" style="left:689px;top:197.5px;width:20px;text-align:center;font-size:5px;color:#555">44</div>
<div class="t" style="left:706.6px;top:197.5px;width:20px;text-align:center;font-size:5px;color:#555">46</div>
<div class="t" style="left:724px;top:197.5px;width:20px;text-align:center;font-size:5px;color:#555">48</div>

<svg class="a" style="left:304.5px;top:192.5px" width="8" height="17" viewBox="0 0 8 17"><path d="M0.8 0.5 H7.2 V2.5 L4 5.5 L0.8 2.5Z" fill="#fff" stroke="#777" stroke-width="0.7"/><path d="M4 8 L7.2 10.5 V16.5 H0.8 V10.5Z" fill="#fff" stroke="#777" stroke-width="0.7"/><path d="M0.8 13 H7.2" stroke="#777" stroke-width="0.7"/></svg>
<svg class="a" style="left:678px;top:199px" width="8" height="7" viewBox="0 0 8 7"><path d="M4 0.5 L7.3 3.5 V6.5 H0.7 V3.5Z" fill="#fff" stroke="#777" stroke-width="0.7"/></svg>
<div class="a" style="left:241px;top:210px;width:504px;height:416px;background:#fff"></div>
<!-- header -->
<div class="a" style="left:311.5px;top:247px;width:372px;height:1px;background:#8a8a8a"></div>
<svg class="a" style="left:312.5px;top:230px" width="46" height="13" viewBox="0 0 46 13"><g fill="#b51d23"><path d="M0 2.5 H5.5 Q8 2.5 8 4.6 Q8 5.8 6.8 6.2 Q8.4 6.6 8.4 8.2 Q8.4 10.2 5.8 10.2 H0Z M2.4 4.2 V5.6 H5 Q5.7 5.6 5.7 4.9 Q5.7 4.2 5 4.2Z M2.4 7 V8.6 H5.2 Q6 8.6 6 7.8 Q6 7 5.2 7Z" fill-rule="evenodd"/><rect x="9.3" y="4.5" width="2.4" height="5.7"/><rect x="9.3" y="2.5" width="2.4" height="1.4"/><path d="M12.6 2.5 H18.1 Q20.6 2.5 20.6 4.6 Q20.6 5.8 19.4 6.2 Q21 6.6 21 8.2 Q21 10.2 18.4 10.2 H12.6Z M15 4.2 V5.6 H17.6 Q18.3 5.6 18.3 4.9 Q18.3 4.2 17.6 4.2Z M15 7 V8.6 H17.8 Q18.6 8.6 18.6 7.8 Q18.6 7 17.8 7Z" fill-rule="evenodd"/><path d="M36 2.5 H42 Q44.8 2.5 44.8 5 Q44.8 6.8 43 7.3 L45.5 10.2 H42.6 L40.5 7.6 H38.4 V10.2 H36Z M38.4 4.3 V6 H41.6 Q42.4 6 42.4 5.15 Q42.4 4.3 41.6 4.3Z" fill-rule="evenodd"/></g><path d="M21.5 0.5 H28.5 Q36.5 0.5 36.5 6.5 Q36.5 12.8 28.5 12.8 H21.5Z M25 3.5 V9.8 H28.3 Q32.3 9.8 32.3 6.6 Q32.3 3.5 28.3 3.5Z" fill="#62c5de" fill-rule="evenodd"/><rect x="0" y="11" width="21" height="1.5" fill="#62b8d8" opacity="0.8"/></svg>
<div class="t" style="left:514px;top:239px;font-size:8.5px;color:#999">航空港区中小学人工智能师生素养培养方案</div>
<div class="a" style="left:308px;top:253.5px;width:0.8px;height:15px;background:#c9c9c9"></div>
<div class="a" style="left:294px;top:268px;width:14.8px;height:0.8px;background:#c9c9c9"></div>
<div class="a" style="left:683px;top:253.5px;width:0.8px;height:15px;background:#c9c9c9"></div>
<div class="a" style="left:683px;top:268px;width:15px;height:0.8px;background:#c9c9c9"></div>
<!-- DOCTEXT -->
<div class="t" style="left:333.10px;top:270.20px;font-size:11px;letter-spacing:0.800px;color:#555;font-family:'Liberation Serif',serif">理论客观题（40分）+1份作品（图像或视频）成绩（60分）</div>
<div class="t" style="left:332.60px;top:294.80px;font-size:11px;letter-spacing:1.200px;color:#2a2a2a;font-weight:bold;font-family:'Liberation Serif',serif">2.2省赛</div>
<div class="t" style="left:332.40px;top:316.40px;font-size:11px;letter-spacing:0.975px;color:#555;font-family:'Liberation Serif',serif">2025年11月，每年举办1次，具体比赛时间、地点由“河南省青少年</div>
<div class="t" style="left:310.20px;top:338.80px;font-size:11px;letter-spacing:1.240px;color:#555;font-family:'Liberation Serif',serif">科技素质服务平台”官方微信公众号另行通知。</div>
<div class="t" style="left:332.50px;top:362.50px;font-size:11px;letter-spacing:0.870px;color:#555;font-family:'Liberation Serif',serif">参赛内容包括三个部分：1份创意作品+设计思路+评委提问。</div>
<div class="t" style="left:332.50px;top:385.50px;font-size:11px;letter-spacing:0.767px;color:#555;font-family:'Liberation Serif',serif">作品：需通过AI绘画工具、AI视频工具结合剪映视频剪辑生成创意</div>
<div class="t" style="left:309.50px;top:408.80px;font-size:11px;letter-spacing:0.758px;color:#555;font-family:'Liberation Serif',serif">作品，其中创作过程中使用到的素材和最终提交的作品，AI生成部分需</div>
<div class="t" style="left:309.50px;top:432.50px;font-size:11px;letter-spacing:0.300px;color:#555;font-family:'Liberation Serif',serif">占90%以上。</div>
<div class="t" style="left:333.00px;top:454.60px;font-size:11px;letter-spacing:0.870px;color:#555;font-family:'Liberation Serif',serif">省赛成绩将由评委现场根据选手的临场表现、思路陈述、作品展</div>
<div class="t" style="left:308.60px;top:476.90px;font-size:11px;letter-spacing:0.927px;color:#555;font-family:'Liberation Serif',serif">示、问题回答等结合评分标准及相关评审资料。依照评分表进行填写。</div>
<div class="t" style="left:332.20px;top:518.20px;font-size:12px;letter-spacing:-0.460px;color:#2a2a2a;font-weight:bold;font-family:'Liberation Serif',serif">四、比赛规则</div>
<div class="t" style="left:330.10px;top:558.60px;font-size:11px;letter-spacing:1.050px;color:#555;font-family:'Liberation Serif',serif">（一）市赛评分标准</div>
<div class="t" style="left:332.00px;top:581.10px;font-size:11px;letter-spacing:0.900px;color:#555;font-family:'Liberation Serif',serif">1、题型及考试范围</div>
<div class="t" style="left:330.00px;top:603.00px;font-size:11px;letter-spacing:0.893px;color:#555;font-family:'Liberation Serif',serif">（1）机上答题的试卷题型分为两种：理论题和实践题，理论题，共</div>
<!-- /DOCTEXT -->
<svg class="a" style="left:510px;top:369px" width="6" height="13"><path d="M0.5 0.5 H2 Q3 0.5 3 1.5 V11.5 Q3 12.5 2 12.5 H0.5 M5.5 0.5 H4 Q3 0.5 3 1.5 M3 11.5 Q3 12.5 4 12.5 H5.5" fill="none" stroke="#333" stroke-width="0.8"/></svg>
<!-- scrollbar + right icons -->
<svg class="a" style="left:976px;top:196px" width="6" height="16"><path d="M0.8 0.8 H5.2 L3 3Z" fill="#666"/><path d="M0.5 4.5 H5.5" stroke="#666" stroke-width="0.6"/><path d="M1 12.5 L3 10.5 L5 12.5Z" fill="#666"/></svg>
<div class="a" style="left:976.7px;top:433px;width:4px;height:23px;border-radius:2px;background:#c9cfd3"></div>
<svg class="a" style="left:976px;top:588px" width="6" height="22"><path d="M1 1 H5 L3 3.5Z" fill="#666"/><path d="M1.5 7 L3 5.5 L4.5 7 M1.5 9 H4.5" fill="none" stroke="#666" stroke-width="0.6"/><rect x="1.5" y="12" width="3" height="3" fill="none" stroke="#666" stroke-width="0.6"/><path d="M1.5 18 L3 19.5 L4.5 18 M1.5 20 L3 21.5 L4.5 20" fill="none" stroke="#666" stroke-width="0.6"/></svg>
<!-- status bar -->
<div class="a" style="left:0;top:626px;width:983px;height:1px;background:rgba(0,0,0,.04)"></div>
<div class="t" style="left:8px;top:629px;font-size:7px;color:#333">页面: 61/96</div>
<div class="a" style="left:52.4px;top:628.5px;width:1px;height:8px;background:#cdd3d7"></div>
<div class="t" style="left:59.5px;top:629px;font-size:7px;color:#333">字数: 33653</div>
<div class="a" style="left:104.7px;top:628.5px;width:1px;height:8px;background:#cdd3d7"></div>
<div class="t" style="left:112px;top:629px;font-size:7px;color:#333">拼写检查: 打开</div>
<svg class="a" style="left:160.5px;top:632px" width="5" height="4"><path d="M0.5 0.8 L2.5 2.8 L4.5 0.8" fill="none" stroke="#555" stroke-width="0.8"/></svg>
<div class="a" style="left:172.5px;top:628.5px;width:1px;height:8px;background:#cdd3d7"></div>
<div class="t" style="left:180.3px;top:629px;font-size:7px;color:#333">AI 校对</div>
<div class="a" style="left:209.4px;top:628.5px;width:1px;height:8px;background:#cdd3d7"></div>
<div class="t" style="left:216.6px;top:629px;font-size:7px;color:#333">兼容模式</div>

<svg class="a" style="left:683px;top:628.5px" width="9" height="7" viewBox="0 0 9 7"><path d="M0.5 3.5 Q4.5 -1.5 8.5 3.5 Q4.5 8.5 0.5 3.5Z" fill="none" stroke="#555" stroke-width="0.8"/><circle cx="4.5" cy="3.5" r="1.3" fill="none" stroke="#555" stroke-width="0.8"/></svg>
<div class="a" style="left:698px;top:628px;width:1px;height:9px;background:#cdd3d7"></div>
<div class="a" style="left:703.5px;top:626.5px;width:12.5px;height:12.5px;background:#d2d8dc"></div>
<svg class="a" style="left:707px;top:628.5px" width="7" height="8" viewBox="0 0 7 8"><rect x="0.5" y="0.5" width="6" height="7" fill="none" stroke="#555" stroke-width="0.8"/><path d="M2 2.5 H5 M2 4.2 H5 M2 5.8 H4" stroke="#555" stroke-width="0.6"/></svg>
<svg class="a" style="left:724.5px;top:628.5px" width="9" height="8" viewBox="0 0 9 8"><path d="M0 0.5 H1.5 M3 0.5 H9 M1.5 2.8 H3 M4 2.8 H9 M1.5 5.2 H3 M4 5.2 H9 M1.5 7.5 H3 M4 7.5 H9" stroke="#555" stroke-width="0.7"/></svg>
<svg class="a" style="left:744.5px;top:628.5px" width="8" height="8"><path d="M0.8 0.5 L7.2 4 L0.8 7.5Z" fill="none" stroke="#555" stroke-width="0.8"/></svg>
<svg class="a" style="left:762px;top:628px" width="9" height="9" viewBox="0 0 9 9"><circle cx="4.5" cy="4.5" r="3.8" fill="none" stroke="#555" stroke-width="0.8"/><ellipse cx="4.5" cy="4.5" rx="1.7" ry="3.8" fill="none" stroke="#555" stroke-width="0.7"/><path d="M0.7 4.5 H8.3" stroke="#555" stroke-width="0.7"/></svg>
<svg class="a" style="left:780.5px;top:628px" width="9" height="9" viewBox="0 0 9 9"><path d="M0.8 8.2 L1.3 6 L6.5 0.8 L8.2 2.5 L3 7.7Z" fill="none" stroke="#555" stroke-width="0.8"/></svg>
<div class="a" style="left:797px;top:628px;width:1px;height:9px;background:#cdd3d7"></div>
<svg class="a" style="left:803.5px;top:628px" width="9" height="9" viewBox="0 0 9 9"><path d="M0.5 2.5 V0.5 H2.5 M6.5 0.5 H8.5 V2.5 M8.5 6.5 V8.5 H6.5 M2.5 8.5 H0.5 V6.5" fill="none" stroke="#555" stroke-width="0.8"/><circle cx="4.5" cy="4.5" r="1.8" fill="none" stroke="#555" stroke-width="0.8"/></svg>
<div class="t" style="left:823.5px;top:629px;font-size:7px;color:#555">110%</div>
<svg class="a" style="left:849px;top:631.2px" width="5" height="4"><path d="M0.6 0.8 L2.5 2.8 L4.4 0.8" fill="none" stroke="#555" stroke-width="1.1"/></svg>
<div class="a" style="left:863px;top:632px;width:7px;height:1.2px;background:#444"></div>
<div class="a" style="left:878.5px;top:632px;width:30px;height:1px;background:#3b82f6"></div>
<div class="a" style="left:908.8px;top:632px;width:31px;height:0.7px;background:#b8bec2"></div>
<div class="a" style="left:906px;top:629.5px;width:5.5px;height:5.5px;border-radius:50%;background:#fff;border:1.2px solid #888"></div>
<svg class="a" style="left:948px;top:629px" width="7" height="7"><path d="M3.5 0.2 V6.8 M0.2 3.5 H6.8" stroke="#444" stroke-width="1.1"/></svg>
<svg class="a" style="left:966px;top:628px" width="9" height="9" viewBox="0 0 9 9"><path d="M0.5 3 V0.5 H3 M6 0.5 H8.5 V3 M8.5 6 V8.5 H6 M3 8.5 H0.5 V6" fill="none" stroke="#555" stroke-width="0.8"/><path d="M1 1 L3 3 M8 1 L6 3 M8 8 L6 6 M1 8 L3 6" stroke="#555" stroke-width="0.6"/></svg>

<!-- PANEL -->
<svg class="a" style="left:994px;top:30px" width="15" height="11" viewBox="0 0 15 11"><circle cx="5.2" cy="2.6" r="2.5" fill="#e6e6e6"/><path d="M0.2 10.8 Q0.2 6 5.2 6 Q10.2 6 10.2 10.8Z" fill="#e6e6e6"/><circle cx="10.8" cy="4.2" r="1.8" fill="#e6e6e6"/><path d="M10.6 7 Q14.6 7 14.6 10.8 H11.2 Q11.2 8.3 10.6 7Z" fill="#e6e6e6"/></svg>
<div class="t" style="left:1011.5px;top:31.5px;font-size:9px;letter-spacing:0px;color:#e0e0e0">成员(7)</div>
<svg class="a" style="left:1087px;top:31px" width="10" height="10" viewBox="0 0 10 10"><path d="M5 0.5 H0.5 V9.5 H9.5 V5" fill="none" stroke="#cfcfcf" stroke-width="1"/><rect x="5.5" y="0.5" width="4" height="4" fill="none" stroke="#cfcfcf" stroke-width="1"/></svg>
<svg class="a" style="left:1104px;top:31px" width="9" height="9"><path d="M0.5 0.5 L8.5 8.5 M8.5 0.5 L0.5 8.5" stroke="#cfcfcf" stroke-width="1"/></svg>
<div class="a" style="left:1121px;top:21px;width:145px;height:27px;background:#1a1a1a"></div>
<svg class="a" style="left:1131px;top:29px" width="13" height="13" viewBox="0 0 13 13"><path d="M0.5 0.5 H8 L9.5 2 V12 H0.5Z" fill="#d0d0d0"/><rect x="2" y="2.5" width="5" height="1.3" fill="#1a1a1a"/><rect x="2" y="5" width="5" height="1.3" fill="#1a1a1a"/><circle cx="9.5" cy="9.5" r="3" fill="#d0d0d0" stroke="#1a1a1a" stroke-width="0.8"/><rect x="9.1" y="8.4" width="0.8" height="2.6" fill="#1a1a1a"/></svg>
<div class="t" style="left:1147px;top:31.5px;font-size:9px;letter-spacing:0.3px;color:#e6e6e6">AI纪要</div>
<div class="a" style="left:1177px;top:29px;width:44px;height:12px;border-radius:2.5px;background:#1677e6"></div>
<div class="t" style="left:1180px;top:31px;font-size:8px;color:#fff">腾讯元宝</div>
<svg class="a" style="left:1212px;top:31px" width="7" height="7"><path d="M0.8 6.2 L6 1 M2 0.8 H6.2 V5" fill="none" stroke="#fff" stroke-width="0.9"/></svg>
<div class="a" style="left:1238px;top:30px;width:1px;height:10px;background:#3a3a3a"></div>
<svg class="a" style="left:1248px;top:33px" width="9" height="5"><path d="M0.5 0.5 L4.5 4.2 L8.5 0.5" fill="none" stroke="#cfcfcf" stroke-width="1"/></svg>

<div class="a" style="left:991px;top:56px;width:239px;height:24px;border:1px solid #3c3c3c;border-radius:3px"></div>
<svg class="a" style="left:998px;top:63px" width="12" height="12" viewBox="0 0 12 12"><circle cx="5" cy="5" r="4.2" fill="none" stroke="#bdbdbd" stroke-width="1.1"/><path d="M8 8 L11.3 11.3" stroke="#bdbdbd" stroke-width="1.1"/></svg>
<div class="t" style="left:1015px;top:63px;font-size:10.5px;color:#9a9a9a">搜索成员</div>
<div class="a" style="left:1235px;top:56px;width:24px;height:24px;border-radius:3px;background:#2a2a2a"></div>
<svg class="a" style="left:1240px;top:61px" width="14" height="14" viewBox="0 0 14 14"><circle cx="6" cy="4.2" r="3.2" fill="none" stroke="#d6d6d6" stroke-width="1.1"/><path d="M0.8 13 Q0.8 8.6 6 8.6 Q7.5 8.6 8.5 9" fill="none" stroke="#d6d6d6" stroke-width="1.1"/><path d="M10.5 8.5 V13.5 M8 11 H13" stroke="#d6d6d6" stroke-width="1.1"/></svg>
<div class="a" style="left:993px;top:91.25px;width:22.5px;height:22.5px;border-radius:50%;overflow:hidden;background:linear-gradient(#ece6e4 0%,#e8e0da 38%,#c8c2b8 50%,#b5b4ae 65%,#9a9080 78%,#6a5a40 100%)"><div class="a" style="left:11px;top:9px;width:7px;height:9px;border-radius:45% 45% 30% 30%;background:#2a2420"></div><div class="a" style="left:10.5px;top:10px;width:3.5px;height:6px;border-radius:40%;background:#b89a88"></div><div class="a" style="left:9px;top:16px;width:13px;height:10px;border-radius:40% 50% 0 0;background:#1a2a40"></div></div>
<div class="t" style="left:1021px;top:93.3px;font-size:9px;transform:scaleX(0.93);transform-origin:0 0;color:#dcdcdc">唐雨情</div>
<div class="t" style="left:1021px;top:105.3px;font-size:9px;transform:scaleX(0.93);transform-origin:0 0;color:#8a8a8a">(我)</div>
<svg class="a" style="left:1215px;top:97px" width="11" height="12" viewBox="0 0 11 12"><rect x="3.3" y="0.5" width="4.4" height="7" rx="2.2" fill="#8c8c8c"/><path d="M1.8 5.5 Q1.8 9 5.5 9 Q9.2 9 9.2 5.5" fill="none" stroke="#8c8c8c" stroke-width="0.9"/><rect x="5" y="9" width="1" height="2" fill="#8c8c8c"/><rect x="3" y="11" width="5" height="0.9" fill="#8c8c8c"/><path d="M1 11 L10 1" stroke="#e4502e" stroke-width="1.3"/></svg>
<svg class="a" style="left:1233px;top:98px" width="12" height="9" viewBox="0 0 12 9"><rect x="0.3" y="1" width="8.4" height="7" rx="1.3" fill="#8c8c8c"/><rect x="9.3" y="2.5" width="2.2" height="4" rx="0.8" fill="#8c8c8c"/><path d="M1 8.8 L9.5 0.2" stroke="#e4502e" stroke-width="1.4"/></svg>
<div class="a" style="left:993px;top:124.25px;width:22.5px;height:22.5px;border-radius:50%;background:radial-gradient(circle at 55% 55%, rgba(255,255,255,.55) 0 8%, transparent 16%), linear-gradient(#8c8c8c 0%, #a0a0a0 25%, #777 45%, rgba(0,0,0,0) 60%), repeating-linear-gradient(90deg, #3c3c3c 0 2px, #bdbdbd 2px 3.5px, #5a5a5a 3.5px 5px, #d8d8d8 5px 6px, #4a4a4a 6px 8px)"></div>
<div class="t" style="left:1021px;top:126.3px;font-size:9px;transform:scaleX(0.93);transform-origin:0 0;color:#dcdcdc">5-蒋会全</div>
<div class="t" style="left:1021px;top:138.3px;font-size:9px;transform:scaleX(0.93);transform-origin:0 0;color:#8a8a8a">(主持人)</div>
<svg class="a" style="left:1215px;top:130px" width="11" height="12" viewBox="0 0 11 12"><rect x="3.3" y="0.5" width="4.4" height="7" rx="2.2" fill="#2fb37a"/><rect x="3.3" y="0.5" width="4.4" height="2.2" rx="1.1" fill="#8c8c8c"/><path d="M1.8 5.5 Q1.8 9 5.5 9 Q9.2 9 9.2 5.5" fill="none" stroke="#8c8c8c" stroke-width="0.9"/><rect x="5" y="9" width="1" height="2" fill="#8c8c8c"/><rect x="3" y="11" width="5" height="0.9" fill="#8c8c8c"/></svg>
<svg class="a" style="left:1196px;top:131px" width="11" height="10" viewBox="0 0 11 10"><rect x="0" y="0" width="11" height="7.5" rx="1" fill="#8c8c8c"/><path d="M3 5.5 Q4 3 7.5 3 L6.8 2 M7.5 3 L6.8 4" fill="none" stroke="#2a2a2a" stroke-width="0.9"/><rect x="3" y="8.5" width="5" height="1.2" fill="#8c8c8c"/></svg>
<svg class="a" style="left:1233px;top:131px" width="12" height="9" viewBox="0 0 12 9"><rect x="0.3" y="1" width="8.4" height="7" rx="1.3" fill="#8c8c8c"/><rect x="9.3" y="2.5" width="2.2" height="4" rx="0.8" fill="#8c8c8c"/><path d="M1 8.8 L9.5 0.2" stroke="#e4502e" stroke-width="1.4"/></svg>
<div class="a" style="left:993px;top:157.25px;width:22.5px;height:22.5px;border-radius:50%;background:linear-gradient(165deg, #9cc2e6 0%, #e4ecf2 38%, #1d3628 48%, #1d3628 63%, #5c7088 72%, #8a98ac 100%)"></div>
<div class="t" style="left:1021px;top:164.8px;font-size:9px;transform:scaleX(0.93);transform-origin:0 0;color:#dcdcdc">张凯</div>
<svg class="a" style="left:1215px;top:163px" width="11" height="12" viewBox="0 0 11 12"><rect x="3.3" y="0.5" width="4.4" height="7" rx="2.2" fill="#8c8c8c"/><rect x="3.3" y="0.5" width="4.4" height="2.2" rx="1.1" fill="#8c8c8c"/><path d="M1.8 5.5 Q1.8 9 5.5 9 Q9.2 9 9.2 5.5" fill="none" stroke="#8c8c8c" stroke-width="0.9"/><rect x="5" y="9" width="1" height="2" fill="#8c8c8c"/><rect x="3" y="11" width="5" height="0.9" fill="#8c8c8c"/></svg>
<svg class="a" style="left:1233px;top:164px" width="12" height="9" viewBox="0 0 12 9"><rect x="0.3" y="1" width="8.4" height="7" rx="1.3" fill="#8c8c8c"/><rect x="9.3" y="2.5" width="2.2" height="4" rx="0.8" fill="#8c8c8c"/><path d="M1 8.8 L9.5 0.2" stroke="#e4502e" stroke-width="1.4"/></svg>
<div class="a" style="left:993px;top:190.25px;width:22.5px;height:22.5px;border-radius:50%;background:radial-gradient(circle at 50% 47%, #ffd68a 0 6%, transparent 12%), linear-gradient(#e3874a 0%, #ec9a5c 40%, #c97a5a 55%, #8a7088 75%, #676894 100%)"></div>
<div class="t" style="left:1021px;top:197.8px;font-size:9px;transform:scaleX(0.93);transform-origin:0 0;color:#dcdcdc">李静</div>
<svg class="a" style="left:1215px;top:196px" width="11" height="12" viewBox="0 0 11 12"><rect x="3.3" y="0.5" width="4.4" height="7" rx="2.2" fill="#8c8c8c"/><path d="M1.8 5.5 Q1.8 9 5.5 9 Q9.2 9 9.2 5.5" fill="none" stroke="#8c8c8c" stroke-width="0.9"/><rect x="5" y="9" width="1" height="2" fill="#8c8c8c"/><rect x="3" y="11" width="5" height="0.9" fill="#8c8c8c"/><path d="M1 11 L10 1" stroke="#e4502e" stroke-width="1.3"/></svg>
<svg class="a" style="left:1233px;top:197px" width="12" height="9" viewBox="0 0 12 9"><rect x="0.3" y="1" width="8.4" height="7" rx="1.3" fill="#8c8c8c"/><rect x="9.3" y="2.5" width="2.2" height="4" rx="0.8" fill="#8c8c8c"/><path d="M1 8.8 L9.5 0.2" stroke="#e4502e" stroke-width="1.4"/></svg>
<div class="a" style="left:993px;top:223.25px;width:22.5px;height:22.5px;border-radius:50%;background:#f2f2f2"></div>
<svg class="a" style="left:999px;top:229.25px" width="11" height="11" viewBox="0 0 11 11"><circle cx="5.5" cy="3.5" r="2.3" fill="#dcdcdc"/><path d="M1.5 10 Q1.5 6.5 5.5 6.5 Q9.5 6.5 9.5 10Z" fill="#dcdcdc"/></svg>
<div class="t" style="left:1021px;top:230.8px;font-size:9px;transform:scaleX(0.93);transform-origin:0 0;color:#dcdcdc">王志祥</div>
<svg class="a" style="left:1215px;top:229px" width="11" height="12" viewBox="0 0 11 12"><rect x="3.3" y="0.5" width="4.4" height="7" rx="2.2" fill="#8c8c8c"/><path d="M1.8 5.5 Q1.8 9 5.5 9 Q9.2 9 9.2 5.5" fill="none" stroke="#8c8c8c" stroke-width="0.9"/><rect x="5" y="9" width="1" height="2" fill="#8c8c8c"/><rect x="3" y="11" width="5" height="0.9" fill="#8c8c8c"/><path d="M1 11 L10 1" stroke="#e4502e" stroke-width="1.3"/></svg>
<svg class="a" style="left:1233px;top:230px" width="12" height="9" viewBox="0 0 12 9"><rect x="0.3" y="1" width="8.4" height="7" rx="1.3" fill="#8c8c8c"/><rect x="9.3" y="2.5" width="2.2" height="4" rx="0.8" fill="#8c8c8c"/><path d="M1 8.8 L9.5 0.2" stroke="#e4502e" stroke-width="1.4"/></svg>
<div class="a" style="left:993px;top:256.25px;width:22.5px;height:22.5px;border-radius:50%;background:linear-gradient(#6f6c78 0%, #8f8588 40%, #a89088 60%, #807070 75%, #54505a 100%)"></div>
<div class="t" style="left:1021px;top:263.8px;font-size:9px;transform:scaleX(0.93);transform-origin:0 0;color:#dcdcdc">吴文文</div>
<svg class="a" style="left:1215px;top:262px" width="11" height="12" viewBox="0 0 11 12"><rect x="3.3" y="0.5" width="4.4" height="7" rx="2.2" fill="#8c8c8c"/><path d="M1.8 5.5 Q1.8 9 5.5 9 Q9.2 9 9.2 5.5" fill="none" stroke="#8c8c8c" stroke-width="0.9"/><rect x="5" y="9" width="1" height="2" fill="#8c8c8c"/><rect x="3" y="11" width="5" height="0.9" fill="#8c8c8c"/><path d="M1 11 L10 1" stroke="#e4502e" stroke-width="1.3"/></svg>
<svg class="a" style="left:1233px;top:263px" width="12" height="9" viewBox="0 0 12 9"><rect x="0.3" y="1" width="8.4" height="7" rx="1.3" fill="#8c8c8c"/><rect x="9.3" y="2.5" width="2.2" height="4" rx="0.8" fill="#8c8c8c"/><path d="M1 8.8 L9.5 0.2" stroke="#e4502e" stroke-width="1.4"/></svg>
<div class="a" style="left:993px;top:289.25px;width:22.5px;height:22.5px;border-radius:50%;background:#2d6fd6"></div>
<div class="t" style="left:994px;top:296.25px;font-size:9.5px;color:#fff;letter-spacing:-0.5px">熙熙</div>
<div class="t" style="left:1021px;top:296.8px;font-size:9px;transform:scaleX(0.93);transform-origin:0 0;color:#dcdcdc">熙熙</div>
<svg class="a" style="left:1215px;top:295px" width="11" height="12" viewBox="0 0 11 12"><rect x="3.3" y="0.5" width="4.4" height="7" rx="2.2" fill="#8c8c8c"/><path d="M1.8 5.5 Q1.8 9 5.5 9 Q9.2 9 9.2 5.5" fill="none" stroke="#8c8c8c" stroke-width="0.9"/><rect x="5" y="9" width="1" height="2" fill="#8c8c8c"/><rect x="3" y="11" width="5" height="0.9" fill="#8c8c8c"/><path d="M1 11 L10 1" stroke="#e4502e" stroke-width="1.3"/></svg>
<svg class="a" style="left:1233px;top:296px" width="12" height="9" viewBox="0 0 12 9"><rect x="0.3" y="1" width="8.4" height="7" rx="1.3" fill="#8c8c8c"/><rect x="9.3" y="2.5" width="2.2" height="4" rx="0.8" fill="#8c8c8c"/><path d="M1 8.8 L9.5 0.2" stroke="#e4502e" stroke-width="1.4"/></svg>

<!-- speaking widget -->
<div class="a" style="left:968px;top:360px;width:180px;height:52px;background:#2c2e31;box-shadow:0 0 2px rgba(0,0,0,.4)"></div>
<div class="a" style="left:968px;top:386px;width:180px;height:1px;background:#1f2022"></div>
<div class="a" style="left:976px;top:371px;width:11px;height:4px;border-radius:2px;background:#1f7ae0"></div>
<svg class="a" style="left:994px;top:367px" width="11" height="12" viewBox="0 0 11 12"><rect x="0.8" y="0.8" width="9.4" height="10.4" rx="1.5" fill="none" stroke="#e8e8e8" stroke-width="1.4"/><rect x="0.8" y="0.8" width="9.4" height="2.6" fill="#e8e8e8"/></svg>
<svg class="a" style="left:1012px;top:367px" width="11" height="12" viewBox="0 0 11 12"><rect x="0" y="0" width="11" height="3" rx="1.5" fill="#e8e8e8"/><rect x="0" y="4.5" width="11" height="3" fill="#e8e8e8"/><rect x="0" y="9" width="11" height="3" rx="1.5" fill="#e8e8e8"/></svg>
<svg class="a" style="left:1129px;top:367px" width="12" height="12" viewBox="0 0 12 12"><rect x="0" y="0.5" width="10" height="1.3" fill="#e8e8e8"/><rect x="0" y="5.3" width="7" height="1.3" fill="#e8e8e8"/><rect x="0" y="10.2" width="10" height="1.3" fill="#e8e8e8"/><path d="M8 3.5 L12 6 L8 8.5Z" fill="#e8e8e8"/></svg>
<svg class="a" style="left:975px;top:393px" width="13" height="13" viewBox="0 0 13 13"><path d="M5 1.5 Q6.5 0 8 1.5 L10 4 Q10.8 6 9 7.5 L7.5 9 Q5.5 10 4 8.5 L3 7 Q2.5 5 4 3.5Z" fill="#c8c8c8"/><path d="M4 10 Q6 11.5 8 10.5" fill="none" stroke="#c8c8c8" stroke-width="0.9"/><path d="M1 12.5 L12 1.5" stroke="#c0392b" stroke-width="1.1"/></svg>
<div class="a" style="left:994px;top:393px;width:1px;height:14px;background:#45474a"></div>
<div class="t" style="left:1001px;top:396.5px;font-size:9px;color:#e6e6e6">正在讲话:&nbsp;&nbsp; 5-蒋会全;</div>
<svg class="a" style="left:1120px;top:391px" width="28" height="20" viewBox="0 0 28 20"><path d="M1 12 L8 5 L12 9 L16 5 L23 12 L19 16 L16 13 L13 16 L11 14 L8 17Z" fill="#45474b" stroke="#45474b" stroke-width="2" stroke-linejoin="round"/></svg>

<!-- bubble -->
<div class="a" style="left:1223px;top:556px;width:37px;height:38.5px;border-radius:50%;background:radial-gradient(ellipse 56% 44% at 56% 27%, rgba(212,160,95,1) 0%, rgba(195,148,95,.9) 50%, rgba(160,130,100,0) 100%), radial-gradient(ellipse 30% 30% at 28% 38%, rgba(235,225,205,.7) 0%, rgba(0,0,0,0) 100%), radial-gradient(circle at 52% 68%, #101c34 0%, #1e3458 36%, #4a70aa 66%, #b4d0f6 88%, #e8f2ff 100%);box-shadow:inset 0 0 3px rgba(215,232,255,.95)"></div>
</body></html>
